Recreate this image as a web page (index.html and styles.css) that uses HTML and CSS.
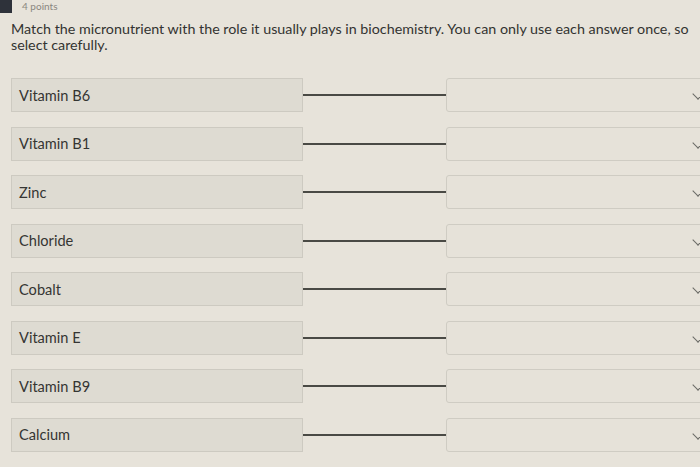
FILE: index.html
```html
<!DOCTYPE html>
<html>
<head>
<meta charset="utf-8">
<link rel="stylesheet" href="styles.css">
</head>
<body>
<div class="page">
  <div class="top">
    <span class="tab"></span>
    <span class="points">4 points</span>
  </div>
  <p class="question">Match the micronutrient with the role it usually plays in biochemistry. You can only use each answer once, so<br>select carefully.</p>
  <div class="rows">
    <div class="row"><div class="term">Vitamin B6</div><div class="link"></div><div class="answer"><span class="chev"></span></div></div>
    <div class="row"><div class="term">Vitamin B1</div><div class="link"></div><div class="answer"><span class="chev"></span></div></div>
    <div class="row"><div class="term">Zinc</div><div class="link"></div><div class="answer"><span class="chev"></span></div></div>
    <div class="row"><div class="term">Chloride</div><div class="link"></div><div class="answer"><span class="chev"></span></div></div>
    <div class="row"><div class="term">Cobalt</div><div class="link"></div><div class="answer"><span class="chev"></span></div></div>
    <div class="row"><div class="term">Vitamin E</div><div class="link"></div><div class="answer"><span class="chev"></span></div></div>
    <div class="row"><div class="term">Vitamin B9</div><div class="link"></div><div class="answer"><span class="chev"></span></div></div>
    <div class="row"><div class="term">Calcium</div><div class="link"></div><div class="answer"><span class="chev"></span></div></div>
  </div>
</div>
</body>
</html>
```
FILE: styles.css
```css
html, body {
  margin: 0;
  padding: 0;
  overflow: hidden;
  background: #e7e3da;
  width: 700px;
  height: 467px;
}
.page {
  font-family: Lato, "Liberation Sans", sans-serif;
  color: #3a3a38;
  padding-left: 11px;
  width: 800px;
}
.top {
  display: flex;
  align-items: flex-start;
  height: 13px;
  margin-left: -11px;
}
.tab {
  width: 12px;
  height: 13px;
  background: #2e323a;
}
.points {
  font-size: 10px;
  color: #8a8780;
  margin-left: 10px;
  line-height: 11px;
  margin-top: 1px;
}
.question {
  margin: 8px 0 0 0;
  font-size: 14.3px;
  line-height: 16px;
  color: #333331;
}
.rows {
  margin-top: 25px;
  display: flex;
  flex-direction: column;
  gap: 14.5px;
}
.row {
  display: grid;
  grid-template-columns: 292px 143px 300px;
  align-items: center;
  height: 34px;
}
.term {
  height: 34px;
  box-sizing: border-box;
  background: #dedbd2;
  border: 1px solid #cdcac1;
  display: flex;
  align-items: center;
  padding-left: 7px;
  font-size: 14.6px;
  color: #353533;
}
.link {
  height: 2px;
  background: #4a4a45;
}
.answer {
  height: 34px;
  box-sizing: border-box;
  border: 1px solid #cfccc3;
  border-radius: 3px;
  background: #e6e2d9;
  position: relative;
}
.chev {
  position: absolute;
  left: 247px;
  top: 11px;
  width: 7px;
  height: 7px;
  border-right: 1.5px solid #6a6a66;
  border-bottom: 1.5px solid #6a6a66;
  transform: rotate(45deg);
}
```
